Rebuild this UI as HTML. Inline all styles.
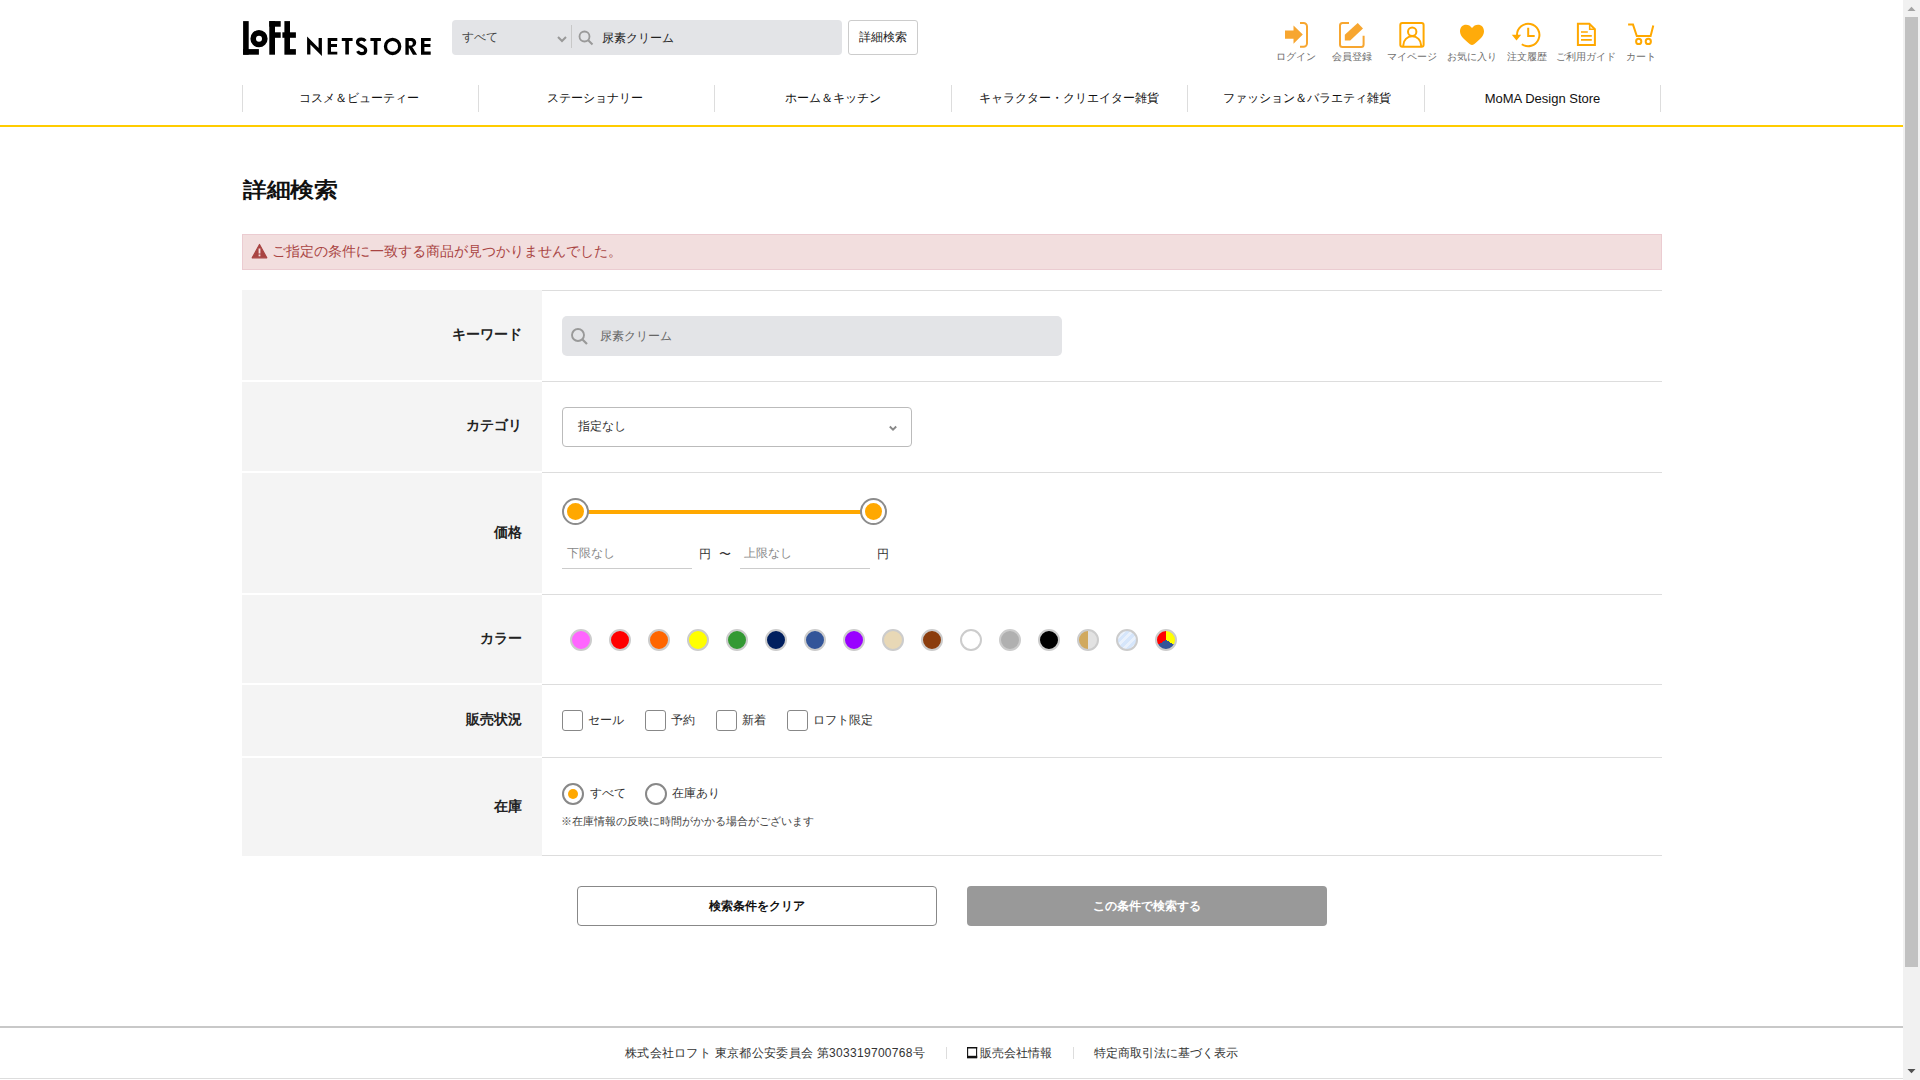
<!DOCTYPE html>
<html lang="ja"><head><meta charset="utf-8"><title>詳細検索</title>
<style>
*{box-sizing:border-box;margin:0;padding:0}
html,body{width:1920px;height:1080px;overflow:hidden;background:#fff}
body{font-family:"Liberation Sans",sans-serif;color:#333;position:relative}
.a{position:absolute;white-space:nowrap}
.sb{position:absolute;left:1903px;top:0;width:17px;height:1080px;background:#f1f1f1}
.sb .th{position:absolute;left:2px;top:17px;width:13px;height:950px;background:#c1c1c1}
.nav .it{position:absolute;top:85px;height:27px;width:236px;border-left:1px solid #ddd;font-size:12px;color:#111;text-align:center;line-height:27px}
.lab{position:absolute;left:242px;width:300px;background:#f4f4f4;text-align:right;padding-right:20px;font-size:14px;font-weight:bold;color:#222}
.rowl{position:absolute;left:542px;width:1120px;height:1px;background:#ddd}
.sw{position:absolute;top:629px;width:22px;height:22px;border-radius:50%;border:2px solid #ccc}
.cb{position:absolute;top:710px;width:21px;height:21px;border:1px solid #888;border-radius:3px;background:#fff}
.ct{position:absolute;top:711px;font-size:12px;line-height:18px;color:#333}
</style></head><body>
<!-- logo -->
<svg class="a" style="left:0;top:0" width="440" height="70" viewBox="0 0 440 70">
<g fill="#000">
<rect x="243.1" y="21.1" width="5.6" height="33.6"/>
<rect x="243.1" y="49.1" width="15.8" height="5.6"/>
<circle cx="259" cy="38.7" r="5.8" fill="none" stroke="#000" stroke-width="5.6"/>
<rect x="269.3" y="21.1" width="5.7" height="33.6"/>
<rect x="269.3" y="21.1" width="11.4" height="5.6"/>
<rect x="275" y="32.3" width="5.7" height="5.5"/>
<rect x="284.4" y="21.1" width="5.6" height="33.6"/>
<rect x="282.4" y="32.3" width="13.5" height="5.5"/>
<rect x="290" y="49.1" width="5.9" height="5.6"/>
<polygon points="307.1,36.4 318.6,48.0 318.6,38.1 321.9,38.1 321.9,56.0 310.4,44.6 310.4,54.6 307.1,54.6"/>
<path d="M327.7 38.1h9.6v2.9h-6.3v3.1h6.0v3h-6.0v4.6h6.3v2.9h-9.6z"/>
<path d="M341.8 38.1h10.8v2.9h-3.7v13.6h-3.6v-13.6h-3.5z"/>
<path d="M365.4 41c-1.1-1.3-2.4-1.9-4-1.9c-2.5 0-3.9 1.4-3.9 3.2c0 4.4 8.2 3.2 8.2 7.9c0 2.1-1.6 3.5-4 3.5c-2 0-3.3-1-4.1-2.6" fill="none" stroke="#000" stroke-width="3.2"/>
<path d="M370.4 38h10.5v3.1h-3.5v13.7h-3.6v-13.7h-3.4z"/>
<circle cx="392.6" cy="46.4" r="7.1" fill="none" stroke="#000" stroke-width="3.3"/>
<path d="M405.4 38h5.5c3.2 0 5.3 1.9 5.3 4.6c0 2.4-1.6 4.1-3.9 4.5l4.8 7.7h-4.1l-4.2-7.2v7.2h-3.4z M408.8 41v4.6h1.8c1.4 0 2.2-0.9 2.2-2.3c0-1.4-0.9-2.3-2.2-2.3z" fill-rule="evenodd"/>
<path d="M421 38h9.7v2.9h-6.3v3.1h6.0v3h-6.0v4.6h6.3v3.2h-9.7z"/>
</g></svg>
<!-- search bar -->
<div class="a" style="left:452px;top:20px;width:390px;height:35px;background:#e3e4e7;border-radius:4px"></div>
<div class="a" style="left:462px;top:28px;font-size:12px;line-height:18px;color:#444">すべて</div>
<svg class="a" style="left:556px;top:35px" width="12" height="9" viewBox="0 0 12 9"><path d="M2 2l4 4 4-4" fill="none" stroke="#999" stroke-width="2"/></svg>
<div class="a" style="left:571px;top:25px;width:1px;height:23px;background:#c8c8c8"></div>
<svg class="a" style="left:578px;top:30px" width="16" height="16" viewBox="0 0 16 16"><circle cx="6.5" cy="6.5" r="5" fill="none" stroke="#999" stroke-width="1.8"/><path d="M10.2 10.2l4.3 4.3" stroke="#999" stroke-width="2"/></svg>
<div class="a" style="left:602px;top:29px;font-size:12px;line-height:18px;color:#222">尿素クリーム</div>
<div class="a" style="left:848px;top:20px;width:70px;height:35px;border:1px solid #ccc;border-radius:3px;font-size:12px;line-height:33px;text-align:center;color:#222">詳細検索</div>
<!-- header icons -->
<svg class="a" style="left:1270px;top:14px" width="400" height="40" viewBox="1270 14 400 40">
<g fill="#f7a630">
<path d="M1285 30.4h8.5v-4.9l9.3 9.1-9.3 9.1v-4.9h-8.5z"/>
<path d="M1300 23h3.5a3.5 3.5 0 0 1 3.5 3.5v16.8a3.5 3.5 0 0 1-3.5 3.5h-3.5" fill="none" stroke="#f7a630" stroke-width="2"/>
<path d="M1349 23h-6.5a2.5 2.5 0 0 0-2.5 2.5v18.9a2.5 2.5 0 0 0 2.5 2.5h18.6a2.5 2.5 0 0 0 2.5-2.5v-8.6" fill="none" stroke="#f7a630" stroke-width="2"/>
<path d="M1344.8 34.8L1357.7 22.9L1363 28.6L1350.2 40.6H1344.8z"/>
</g>
<g fill="none" stroke="#ffa800" stroke-width="2">
<rect x="1400.3" y="23" width="23.3" height="23.7" rx="2"/>
<circle cx="1412.2" cy="31.8" r="4.2"/>
<path d="M1403.3 46.5v-1.3a8.9 9 0 0 1 17.8 0v1.3"/>
<path d="M1517 35A11.2 11.2 0 1 1 1521.8 44.2"/>
<path d="M1528.2 27.8v8.3h6.5"/>
<path d="M1577.9 23.8h11.4l5.6 5.4v15.8h-17z"/>
<path d="M1589.7 23.8v5.4h5.2" stroke-width="1.6"/>
<path d="M1581 32h6.8M1581 35.9h10.8M1581 39.9h10.8" stroke-width="1.7"/>
<path d="M1628.1 24.6h4.9l3.8 11.4h13.8l2.7-10.5"/>
<circle cx="1638.7" cy="41.4" r="2.6"/>
<circle cx="1648.3" cy="41.4" r="2.6"/>
</g>
<path fill="#ffab0a" d="M1472 28.1C1470.5 26 1468.5 24.8 1466 24.8C1462.5 24.8 1460 27.5 1460 31.5C1460 36.5 1466 41 1470 44.3Q1472 45.7 1474 44.3C1478 41 1484 36.5 1484 31.5C1484 27.5 1481.5 24.8 1478 24.8C1475.5 24.8 1473.5 26 1472 28.1z"/>
<path fill="#ffa800" d="M1511.8 34.8h9.4l-4.7 5.8z"/>

</svg>
<div class="a" style="left:1276px;top:50px;font-size:10px;line-height:14px;color:#6e6e6e">ログイン</div>
<div class="a" style="left:1332px;top:50px;font-size:10px;line-height:14px;color:#6e6e6e">会員登録</div>
<div class="a" style="left:1387px;top:50px;font-size:10px;line-height:14px;color:#6e6e6e">マイページ</div>
<div class="a" style="left:1447px;top:50px;font-size:10px;line-height:14px;color:#6e6e6e">お気に入り</div>
<div class="a" style="left:1507px;top:50px;font-size:10px;line-height:14px;color:#6e6e6e">注文履歴</div>
<div class="a" style="left:1556px;top:50px;font-size:10px;line-height:14px;color:#6e6e6e">ご利用ガイド</div>
<div class="a" style="left:1626px;top:50px;font-size:10px;line-height:14px;color:#6e6e6e">カート</div>
<!-- nav -->
<div class="nav">
<div class="it" style="left:242px;text-indent:-3px">コスメ＆ビューティー</div>
<div class="it" style="left:478px;text-indent:-3px">ステーショナリー</div>
<div class="it" style="left:714px">ホーム＆キッチン</div>
<div class="it" style="left:951px;text-indent:-2px">キャラクター・クリエイター雑貨</div>
<div class="it" style="left:1187px;text-indent:2px">ファッション＆バラエティ雑貨</div>
<div class="it" style="left:1424px;font-size:13px">MoMA Design Store</div>
<div class="a" style="left:1660px;top:85px;width:1px;height:27px;background:#ddd"></div>
</div>
<div class="a" style="left:0;top:125px;width:1903px;height:2px;background:#ffcc00"></div>
<!-- title -->
<div class="a" style="left:243px;top:174px;font-size:24px;line-height:30px;font-weight:bold;color:#111;letter-spacing:-0.5px;transform:scaleY(0.88);transform-origin:0 26px">詳細検索</div>
<!-- alert -->
<div class="a" style="left:242px;top:234px;width:1420px;height:36px;background:#f2dede;border:1px solid #ebccd1"></div>
<svg class="a" style="left:251px;top:243px" width="17" height="16" viewBox="0 0 17 16"><path d="M8.5 1.5L15.8 14.8H1.2z" fill="#a94442" stroke="#a94442" stroke-width="1.2" stroke-linejoin="round"/><rect x="7.6" y="5.5" width="1.8" height="5" fill="#f2dede"/><rect x="7.6" y="11.5" width="1.8" height="1.8" fill="#f2dede"/></svg>
<div class="a" style="left:272px;top:241px;font-size:14px;line-height:20px;color:#a94442">ご指定の条件に一致する商品が見つかりませんでした。</div>
<!-- form -->
<div class="rowl" style="top:290px"></div>
<div class="lab" style="top:290px;height:90px;line-height:88px">キーワード</div>
<div class="a" style="left:562px;top:316px;width:500px;height:40px;background:#e3e4e7;border-radius:5px"></div>
<svg class="a" style="left:570px;top:327px" width="19" height="19" viewBox="0 0 19 19"><circle cx="8" cy="8" r="6" fill="none" stroke="#999" stroke-width="1.9"/><path d="M12.5 12.5l4.5 4.5" stroke="#999" stroke-width="2.2"/></svg>
<div class="a" style="left:600px;top:327px;font-size:12px;line-height:18px;color:#666">尿素クリーム</div>

<div class="rowl" style="top:381px"></div>
<div class="lab" style="top:382px;height:89px;line-height:87px">カテゴリ</div>
<div class="a" style="left:562px;top:407px;width:350px;height:40px;border:1px solid #bbb;border-radius:4px;background:#fff"></div>
<div class="a" style="left:578px;top:417px;font-size:12px;line-height:18px;color:#333">指定なし</div>
<svg class="a" style="left:886px;top:423px" width="12" height="10" viewBox="0 0 12 10"><path d="M3.8 3.5l3.2 3.2 3.2-3.2" fill="none" stroke="#888" stroke-width="1.9"/></svg>

<div class="rowl" style="top:472px"></div>
<div class="lab" style="top:473px;height:120px;line-height:118px">価格</div>
<div class="a" style="left:580px;top:510px;width:290px;height:4px;background:#ffa800"></div>
<div class="a" style="left:562px;top:498px;width:27px;height:27px;border-radius:50%;border:2px solid #8c8c8c;background:#fff"><div style="position:absolute;left:3px;top:3px;width:17px;height:17px;border-radius:50%;background:#ffa800"></div></div>
<div class="a" style="left:860px;top:498px;width:27px;height:27px;border-radius:50%;border:2px solid #8c8c8c;background:#fff"><div style="position:absolute;left:3px;top:3px;width:17px;height:17px;border-radius:50%;background:#ffa800"></div></div>
<div class="a" style="left:562px;top:568px;width:130px;height:1px;background:#ccc"></div>
<div class="a" style="left:567px;top:544px;font-size:12px;line-height:18px;color:#888">下限なし</div>
<div class="a" style="left:699px;top:545px;font-size:12px;line-height:18px;color:#333">円</div>
<div class="a" style="left:719px;top:545px;font-size:12px;line-height:18px;color:#333">〜</div>
<div class="a" style="left:740px;top:568px;width:130px;height:1px;background:#ccc"></div>
<div class="a" style="left:744px;top:544px;font-size:12px;line-height:18px;color:#888">上限なし</div>
<div class="a" style="left:877px;top:545px;font-size:12px;line-height:18px;color:#333">円</div>

<div class="rowl" style="top:594px"></div>
<div class="lab" style="top:595px;height:88px;line-height:86px">カラー</div>
<div class="sw" style="left:570px;background:#ff66ff"></div>
<div class="sw" style="left:609px;background:#ff0000"></div>
<div class="sw" style="left:648px;background:#ff6600"></div>
<div class="sw" style="left:687px;background:#ffff00"></div>
<div class="sw" style="left:726px;background:#339933"></div>
<div class="sw" style="left:765px;background:#001f5f"></div>
<div class="sw" style="left:804px;background:#335599"></div>
<div class="sw" style="left:843px;background:#9900ff"></div>
<div class="sw" style="left:882px;background:#e8d8b6"></div>
<div class="sw" style="left:921px;background:#8b3d0d"></div>
<div class="sw" style="left:960px;background:#fff"></div>
<div class="sw" style="left:999px;background:#b0b0b0"></div>
<div class="sw" style="left:1038px;background:#000"></div>
<div class="sw" style="left:1077px;background:linear-gradient(90deg,#d1a95e 50%,#e2e2e2 50%)"></div>
<div class="sw" style="left:1116px;background:repeating-linear-gradient(135deg,#d6e6fb 0 3px,#e9f1fc 3px 6px)"></div>
<div class="sw" style="left:1155px;background:conic-gradient(from 0deg,#ffff00 0 120deg,#335599 120deg 240deg,#ff0000 240deg 360deg)"></div>

<div class="rowl" style="top:684px"></div>
<div class="lab" style="top:685px;height:71px;line-height:69px">販売状況</div>
<div class="cb" style="left:562px"></div><div class="ct" style="left:588px">セール</div>
<div class="cb" style="left:645px"></div><div class="ct" style="left:671px">予約</div>
<div class="cb" style="left:716px"></div><div class="ct" style="left:742px">新着</div>
<div class="cb" style="left:787px"></div><div class="ct" style="left:813px">ロフト限定</div>

<div class="rowl" style="top:757px"></div>
<div class="lab" style="top:758px;height:98px;line-height:96px">在庫</div>
<div class="a" style="left:562px;top:783px;width:22px;height:22px;border-radius:50%;border:2px solid #888;background:#fff"><div style="position:absolute;left:4px;top:4px;width:10px;height:10px;border-radius:50%;background:#ffa800"></div></div>
<div class="ct" style="left:590px;top:784px">すべて</div>
<div class="a" style="left:645px;top:783px;width:22px;height:22px;border-radius:50%;border:2px solid #888;background:#fff"></div>
<div class="ct" style="left:672px;top:784px">在庫あり</div>
<div class="a" style="left:561px;top:813px;font-size:11px;line-height:17px;color:#444">※在庫情報の反映に時間がかかる場合がございます</div>
<div class="rowl" style="top:855px"></div>

<!-- buttons -->
<div class="a" style="left:577px;top:886px;width:360px;height:40px;border:1px solid #888;border-radius:4px;background:#fff;font-size:12px;font-weight:bold;line-height:38px;text-align:center;color:#111">検索条件をクリア</div>
<div class="a" style="left:967px;top:886px;width:360px;height:40px;border-radius:4px;background:#999;font-size:12px;font-weight:bold;line-height:40px;text-align:center;color:#fff">この条件で検索する</div>

<!-- footer -->
<div class="a" style="left:0;top:1026px;width:1903px;height:2px;background:#c8c8c8"></div>
<div class="a" style="left:625px;top:1044px;font-size:12px;letter-spacing:0.3px;line-height:18px;color:#333">株式会社ロフト 東京都公安委員会 第303319700768号</div>
<div class="a" style="left:946px;top:1047px;width:1px;height:12px;background:#ddd"></div>
<svg class="a" style="left:966px;top:1046px" width="12" height="13" viewBox="0 0 12 13"><path d="M1.6 1.5h9v10.3h-9z" fill="none" stroke="#111" stroke-width="1.1"/><rect x="1" y="1" width="10.2" height="1.5" fill="#111"/><rect x="1" y="9.8" width="10.2" height="2.3" fill="#111"/></svg>
<div class="a" style="left:980px;top:1044px;font-size:12px;line-height:18px;color:#333">販売会社情報</div>
<div class="a" style="left:1073px;top:1047px;width:1px;height:12px;background:#ddd"></div>
<div class="a" style="left:1094px;top:1044px;font-size:12px;line-height:18px;color:#333">特定商取引法に基づく表示</div>
<div class="a" style="left:0;top:1078px;width:1903px;height:1px;background:#ddd"></div>

<!-- scrollbar -->
<div class="sb"><div class="th"></div>
<svg style="position:absolute;left:0;top:0" width="17" height="17" viewBox="0 0 17 17"><path d="M4.5 11h8l-4-4.2z" fill="#a3a3a3"/></svg>
<svg style="position:absolute;left:0;top:1063px" width="17" height="17" viewBox="0 0 17 17"><path d="M4.5 6h8l-4 4.2z" fill="#505050"/></svg>
</div>
</body></html>
